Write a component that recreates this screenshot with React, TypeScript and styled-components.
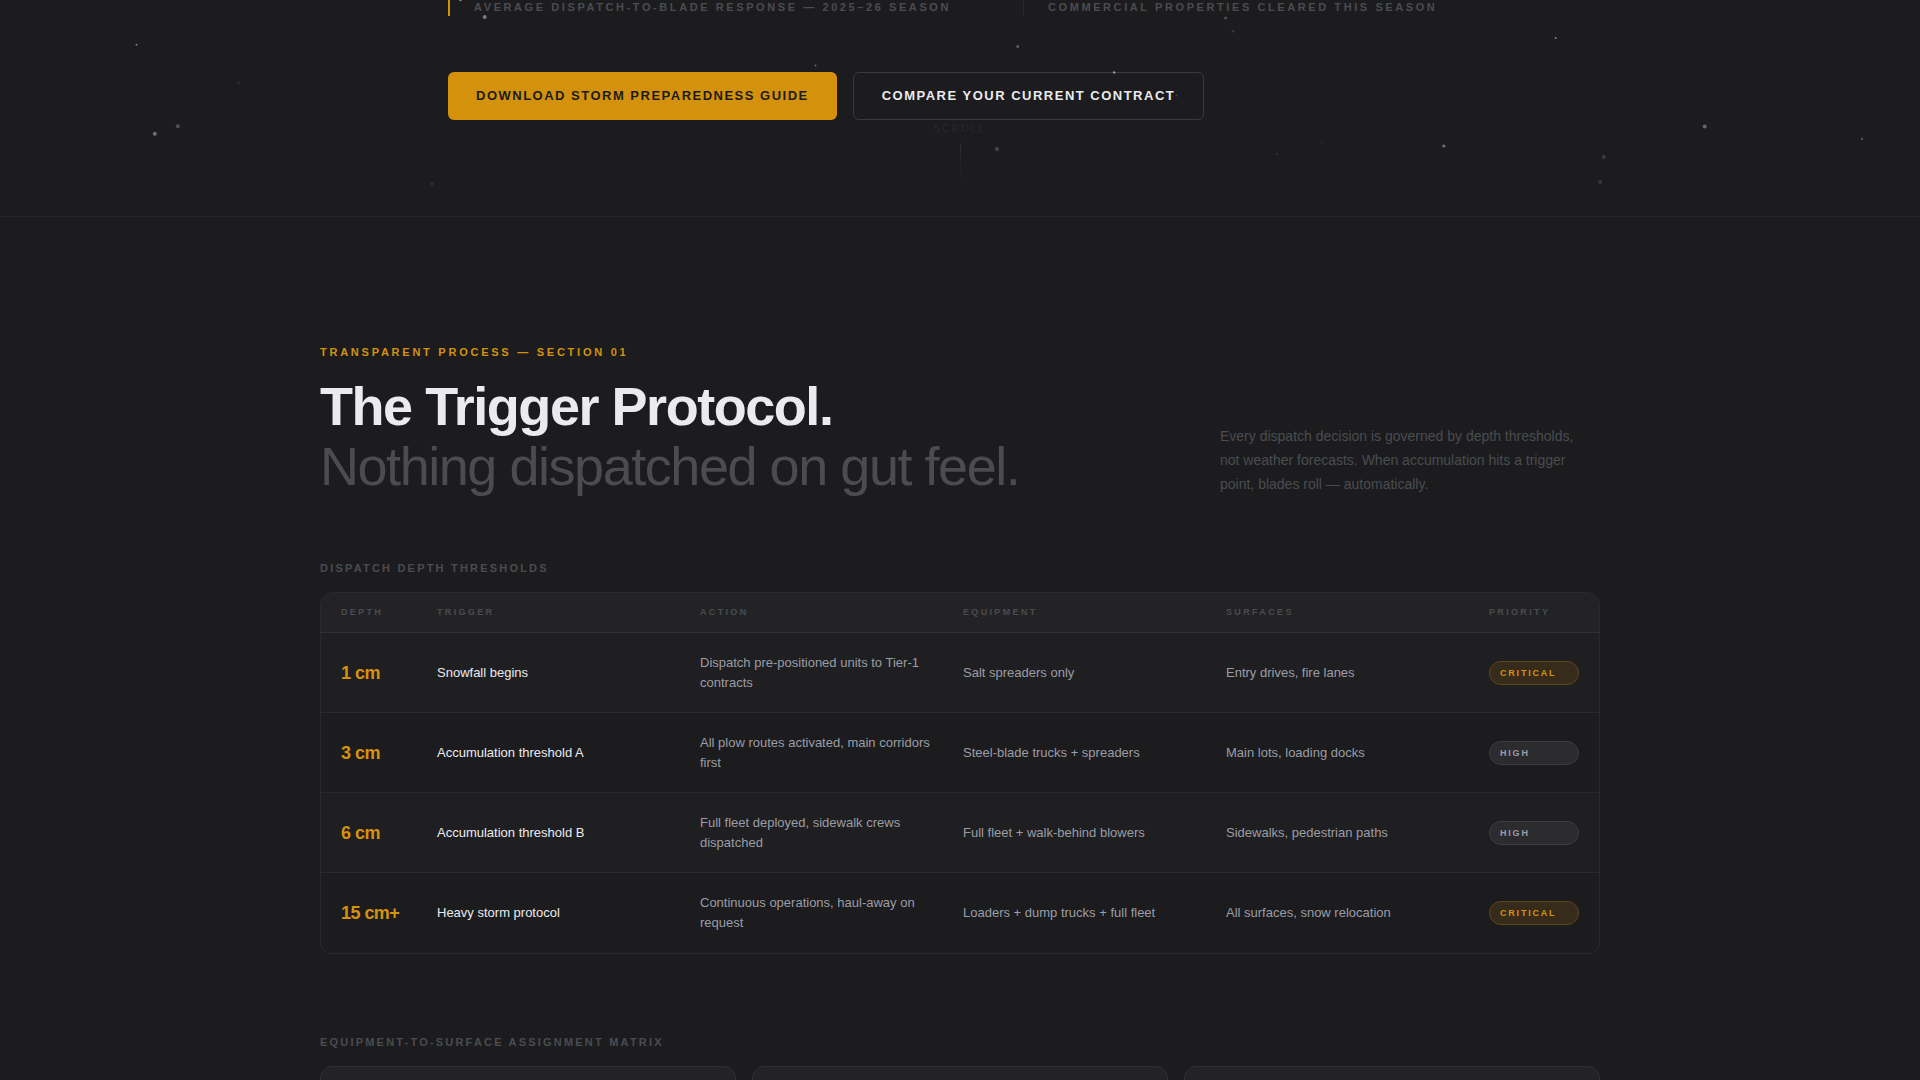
import React from "react";
import styled, { createGlobalStyle } from "styled-components";

const color = {
  bg: "#1c1c1e",
  line: "#2a2a2d",
  amber: "#d4920c",
  text: "#ebebed",
  soft: "#9b9da6",
  dim: "#4a4c50",
};

const GlobalStyle = createGlobalStyle`
  *, *::before, *::after { box-sizing: border-box; }
  body {
    margin: 0;
    background: ${color.bg};
    color: ${color.text};
    font-family: "Liberation Sans", Arial, Helvetica, sans-serif;
  }
  h2, h3, p { margin: 0; }
`;

const Page = styled.div`
  height: 100vh;
  overflow: hidden;
`;

const Hero = styled.section`
  position: relative;
  height: 217px;
  border-bottom: 1px solid #262629;
`;

const HeroInner = styled.div`
  max-width: 1024px;
  margin: 0 auto;
`;

const Stats = styled.div`
  display: flex;
  gap: 72px;
`;

const Stat = styled.p<{ $lead?: boolean }>`
  padding: 0 0 2px 24px;
  border-left: ${(p) => (p.$lead ? `2px solid ${color.amber}` : `1px solid ${color.line}`)};
  font-size: 11px;
  line-height: 14px;
  font-weight: 700;
  letter-spacing: 0.235em;
  text-transform: uppercase;
  color: ${color.dim};
`;

const Actions = styled.div`
  display: flex;
  gap: 16px;
  margin-top: 56px;
`;

const Button = styled.button<{ $primary?: boolean }>`
  height: 48px;
  padding: 0 28px 2px;
  border: ${(p) => (p.$primary ? "0" : "1px solid #3a3a3e")};
  border-radius: 6px;
  background: ${(p) => (p.$primary ? color.amber : "transparent")};
  color: ${(p) => (p.$primary ? color.bg : color.text)};
  font-family: inherit;
  font-size: 13px;
  font-weight: 700;
  letter-spacing: 0.115em;
  text-transform: uppercase;
  cursor: pointer;
`;

const ScrollCue = styled.div`
  display: flex;
  flex-direction: column;
  align-items: center;
  gap: 8px;
  margin-top: 3px;
  font-size: 10px;
  line-height: 12px;
  letter-spacing: 0.22em;
  color: #28282b;
`;

const ScrollLine = styled.span`
  width: 1px;
  height: 40px;
  background: linear-gradient(#2e2e31, transparent);
`;

const Snow = styled.svg`
  position: absolute;
  inset: 0;
  width: 100%;
  height: 100%;
  pointer-events: none;
`;

const Section = styled.section`
  max-width: 1280px;
  margin: 0 auto;
  padding-top: 128px;
`;

const Eyebrow = styled.p`
  font-size: 11px;
  line-height: 14px;
  font-weight: 700;
  letter-spacing: 0.25em;
  text-transform: uppercase;
  color: ${color.amber};
`;

const SectionHead = styled.div`
  display: grid;
  grid-template-columns: 1fr 380px;
  align-items: end;
  margin-top: 17px;
`;

const Title = styled.h2`
  font-size: 54px;
  line-height: 60px;
  font-weight: 700;
  letter-spacing: -0.027em;
`;

const TitleSoft = styled.span`
  display: block;
  font-weight: 400;
  color: ${color.dim};
`;

const Lead = styled.p`
  max-width: 368px;
  font-size: 14px;
  line-height: 24px;
  color: ${color.dim};
`;

const Block = styled.div`
  padding-top: 64px;

  & + & { padding-top: 80px; }
`;

const Label = styled.h3`
  margin-bottom: 16px;
  font-size: 11px;
  line-height: 16px;
  font-weight: 700;
  letter-spacing: 0.2em;
  text-transform: uppercase;
  color: ${color.dim};
`;

const TableFrame = styled.div`
  overflow: hidden;
  border: 1px solid ${color.line};
  border-radius: 12px;
`;

const Table = styled.table`
  width: 100%;
  table-layout: fixed;
  border-collapse: separate;
  border-spacing: 0;
  text-align: left;
`;

const HeadCell = styled.th`
  height: 40px;
  padding: 0 16px 2px 0;
  border-bottom: 1px solid #303033;
  background: #232325;
  font-size: 9px;
  line-height: 12px;
  font-weight: 700;
  letter-spacing: 0.26em;
  text-transform: uppercase;
  color: ${color.dim};

  &:first-child { width: 116px; padding-left: 20px; }
  &:last-child { width: 110px; padding-right: 20px; }
`;

const Row = styled.tr`
  &:nth-child(odd) { background: #1f1f21; }
  &:not(:last-child) > * { border-bottom: 1px solid ${color.line}; }
`;

const Cell = styled.td<{ $strong?: boolean }>`
  height: 80px;
  padding: 0 16px 0 0;
  font-size: 13px;
  line-height: 20px;
  color: ${(p) => (p.$strong ? color.text : color.soft)};

  &:last-child { padding-right: 20px; }
`;

const Depth = styled.th`
  padding: 0 0 0 20px;
  font-size: 18px;
  line-height: 20px;
  font-weight: 700;
  letter-spacing: -0.03em;
  color: ${color.amber};
`;

const Badge = styled.span<{ $critical?: boolean }>`
  display: block;
  padding: 5px 10px;
  border: 1px solid ${(p) => (p.$critical ? "#5f4817" : "#3d3d41")};
  border-radius: 12px;
  background: ${(p) => (p.$critical ? "#372c1b" : "#2c2c2f")};
  color: ${(p) => (p.$critical ? color.amber : color.soft)};
  font-size: 9px;
  line-height: 12px;
  font-weight: 700;
  letter-spacing: 0.2em;
  text-transform: uppercase;
`;

const Cards = styled.div`
  display: grid;
  grid-template-columns: repeat(3, 1fr);
  gap: 16px;
`;

const Card = styled.article`
  min-height: 240px;
  border: 1px solid #303033;
  border-radius: 12px;
  background: #232326;
`;

const flakes: [number, number, number, number][] = [
  [136.5, 44.7, 1, 0.45], [238.5, 83.3, 1, 0.15], [177.8, 126.2, 2, 0.25], [154.8, 133.8, 2, 0.4],
  [432, 183.5, 2, 0.08], [460.5, 0, 1.3, 0.5], [484.7, 17, 2, 0.45], [815.5, 65.6, 1, 0.35],
  [1017.7, 46.6, 1.5, 0.3], [1114.2, 72.4, 1.2, 0.6], [1176.5, 95.5, 1, 0.2], [997, 149, 2, 0.2],
  [1225.7, 18, 1.5, 0.25], [1233, 31.2, 1.3, 0.15], [1277, 154, 1, 0.1], [1322, 142, 1.2, 0.06],
  [1443.8, 146, 1.6, 0.4], [1555.6, 38, 1, 0.5], [1603.7, 156.9, 2, 0.15], [1600.2, 182, 2, 0.13],
  [1704.7, 126.4, 2, 0.35], [1862, 139, 1.2, 0.25],
];

const rows = [
  { depth: "1 cm", trigger: "Snowfall begins", action: "Dispatch pre-positioned units to Tier-1 contracts", equipment: "Salt spreaders only", surfaces: "Entry drives, fire lanes", priority: "Critical" },
  { depth: "3 cm", trigger: "Accumulation threshold A", action: "All plow routes activated, main corridors first", equipment: "Steel-blade trucks + spreaders", surfaces: "Main lots, loading docks", priority: "High" },
  { depth: "6 cm", trigger: "Accumulation threshold B", action: "Full fleet deployed, sidewalk crews dispatched", equipment: "Full fleet + walk-behind blowers", surfaces: "Sidewalks, pedestrian paths", priority: "High" },
  { depth: "15 cm+", trigger: "Heavy storm protocol", action: "Continuous operations, haul-away on request", equipment: "Loaders + dump trucks + full fleet", surfaces: "All surfaces, snow relocation", priority: "Critical" },
];

const columns = ["Depth", "Trigger", "Action", "Equipment", "Surfaces", "Priority"];

export default function App() {
  return (
    <>
      <GlobalStyle />
      <Page>
        <Hero>
          <HeroInner>
            <Stats>
              <Stat $lead>Average dispatch-to-blade response — 2025–26 season</Stat>
              <Stat>Commercial properties cleared this season</Stat>
            </Stats>
            <Actions>
              <Button $primary type="button">Download Storm Preparedness Guide</Button>
              <Button type="button">Compare Your Current Contract</Button>
            </Actions>
          </HeroInner>
          <ScrollCue>
            <span>SCROLL</span>
            <ScrollLine />
          </ScrollCue>
          <Snow aria-hidden="true">
            {flakes.map(([x, y, r, o]) => (
              <circle key={`${x}-${y}`} cx={x} cy={y} r={r} fill="#f0f0f2" opacity={o} />
            ))}
          </Snow>
        </Hero>
        <Section>
          <Eyebrow>Transparent Process — Section 01</Eyebrow>
          <SectionHead>
            <Title>
              The Trigger Protocol.
              <TitleSoft>Nothing dispatched on gut feel.</TitleSoft>
            </Title>
            <Lead>
              Every dispatch decision is governed by depth thresholds, not weather forecasts. When
              accumulation hits a trigger point, blades roll — automatically.
            </Lead>
          </SectionHead>
          <Block>
            <Label>Dispatch Depth Thresholds</Label>
            <TableFrame>
              <Table>
                <thead>
                  <tr>
                    {columns.map((name) => (
                      <HeadCell key={name} scope="col">{name}</HeadCell>
                    ))}
                  </tr>
                </thead>
                <tbody>
                  {rows.map((row) => (
                    <Row key={row.depth}>
                      <Depth scope="row">{row.depth}</Depth>
                      <Cell $strong>{row.trigger}</Cell>
                      <Cell>{row.action}</Cell>
                      <Cell>{row.equipment}</Cell>
                      <Cell>{row.surfaces}</Cell>
                      <Cell>
                        <Badge $critical={row.priority === "Critical"}>{row.priority}</Badge>
                      </Cell>
                    </Row>
                  ))}
                </tbody>
              </Table>
            </TableFrame>
          </Block>
          <Block>
            <Label>Equipment-to-Surface Assignment Matrix</Label>
            <Cards>
              <Card />
              <Card />
              <Card />
            </Cards>
          </Block>
        </Section>
      </Page>
    </>
  );
}
